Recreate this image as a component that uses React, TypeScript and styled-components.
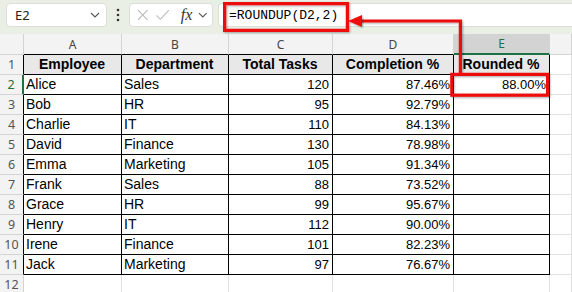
import styled, { createGlobalStyle } from "styled-components";

const GREEN = "#1e7145";

const GlobalStyle = createGlobalStyle`
  html, body {
    margin: 0;
    padding: 0;
    background: #ffffff;
    overflow: hidden;
  }
`;

const Page = styled.div`
  position: relative;
  width: 572px;
  height: 292px;
  overflow: hidden;
  background: #ffffff;
`;

const Toolbar = styled.div`
  display: flex;
  align-items: flex-start;
  height: 34px;
  box-sizing: border-box;
  padding: 3px 0 0 6px;
  background: #e9efe5;
  font-family: "Noto Sans", "Liberation Sans", sans-serif;
`;

const NameBox = styled.div`
  display: flex;
  align-items: center;
  justify-content: space-between;
  width: 101px;
  height: 24px;
  box-sizing: border-box;
  padding: 0 6px 0 8px;
  background: #ffffff;
  border: 1px solid #dcdfd9;
  border-radius: 4px;
  font-size: 13px;
  color: #222222;
`;

const Dots = styled.div`
  width: 22px;
  height: 24px;
  display: flex;
  align-items: center;
  justify-content: center;
`;

const FxGroup = styled.div`
  display: flex;
  align-items: center;
  width: 84px;
  height: 24px;
  box-sizing: border-box;
  padding: 0 4px 0 6px;
  gap: 6px;
  background: #ffffff;
  border: 1px solid #dcdfd9;
  border-radius: 4px;
`;

const FxLabel = styled.span`
  font-family: "Liberation Serif", serif;
  font-style: italic;
  font-size: 16px;
  color: #333333;
  margin-left: 4px;
`;

const FormulaInput = styled.div`
  flex: 1;
  height: 24px;
  margin-left: 5px;
  box-sizing: border-box;
  padding-left: 10px;
  background: #ffffff;
  border: 1px solid #dcdfd9;
  border-right: none;
  border-radius: 4px 0 0 4px;
  display: flex;
  align-items: center;
  font-family: "Liberation Mono", monospace;
  font-size: 13px;
  color: #000000;
`;

const Sheet = styled.div`
  display: grid;
  grid-template-columns: 24px 98px 107px 104px 121px 96px 1fr;
  grid-template-rows: 21px;
  grid-auto-rows: 20px;
  font-family: "Liberation Sans", Arial, sans-serif;
`;

const Corner = styled.div`
  background: #f3f3f3;
  box-sizing: border-box;
  border-right: 1px solid #d4d4d4;
  border-bottom: 1px solid #d4d4d4;
`;

const ColHead = styled.div<{ $active?: boolean; $edge?: boolean }>`
  display: flex;
  align-items: center;
  justify-content: center;
  box-sizing: border-box;
  background: ${(p) => (p.$active ? "#d3d3d3" : "#f3f3f3")};
  border-right: 1px solid #d4d4d4;
  border-bottom: ${(p) =>
    p.$active ? `2px solid ${GREEN}` : p.$edge ? "1px solid #000000" : "1px solid #d4d4d4"};
  font-family: "Noto Sans", sans-serif;
  font-size: 12px;
  color: ${(p) => (p.$active ? GREEN : "#444444")};
`;

const RowHead = styled.div<{ $active?: boolean; $edge?: boolean }>`
  display: flex;
  align-items: center;
  justify-content: center;
  box-sizing: border-box;
  background: #f3f3f3;
  border-bottom: 1px solid #d4d4d4;
  border-right: ${(p) =>
    p.$active ? `2px solid ${GREEN}` : p.$edge ? "1px solid #000000" : "1px solid #d4d4d4"};
  font-family: "Noto Sans", sans-serif;
  font-size: 12.5px;
  color: ${(p) => (p.$active ? GREEN : "#555555")};
`;

const Cell = styled.div<{ $align?: "left" | "right" | "center"; $head?: boolean; $table?: boolean; $num?: boolean }>`
  box-sizing: border-box;
  padding: 0 3px 0 2px;
  line-height: 19px;
  white-space: nowrap;
  overflow: hidden;
  text-align: ${(p) => p.$align ?? "left"};
  font-size: ${(p) => (p.$num ? "13px" : "14px")};
  font-weight: ${(p) => (p.$head ? 700 : 400)};
  color: #000000;
  background: ${(p) => (p.$head ? "#e8e8e8" : "#ffffff")};
  border-right: 1px solid ${(p) => (p.$table ? "#000000" : "#e1e1e1")};
  border-bottom: 1px solid ${(p) => (p.$table ? "#000000" : "#e1e1e1")};
`;

const Overlay = styled.svg`
  position: absolute;
  left: 0;
  top: 0;
  pointer-events: none;
`;

const columns = ["A", "B", "C", "D", "E", ""];
const headers = ["Employee", "Department", "Total Tasks", "Completion %", "Rounded %"];

const rows: [string, string, string, string, string][] = [
  ["Alice", "Sales", "120", "87.46%", "88.00%"],
  ["Bob", "HR", "95", "92.79%", ""],
  ["Charlie", "IT", "110", "84.13%", ""],
  ["David", "Finance", "130", "78.98%", ""],
  ["Emma", "Marketing", "105", "91.34%", ""],
  ["Frank", "Sales", "88", "73.52%", ""],
  ["Grace", "HR", "99", "95.67%", ""],
  ["Henry", "IT", "112", "90.00%", ""],
  ["Irene", "Finance", "101", "82.23%", ""],
  ["Jack", "Marketing", "97", "76.67%", ""],
];

function Chevron() {
  return (
    <svg width="10" height="6" viewBox="0 0 10 6">
      <path d="M1 1 L5 5 L9 1" fill="none" stroke="#555" strokeWidth="1.1" />
    </svg>
  );
}

export default function App() {
  return (
    <>
      <GlobalStyle />
      <Page>
        <Toolbar>
          <NameBox>
            <span>E2</span>
            <Chevron />
          </NameBox>
          <Dots>
            <svg width="4" height="14" viewBox="0 0 4 14">
              <circle cx="2" cy="2" r="1.3" fill="#333" />
              <circle cx="2" cy="7" r="1.3" fill="#333" />
              <circle cx="2" cy="12" r="1.3" fill="#333" />
            </svg>
          </Dots>
          <FxGroup>
            <svg width="14" height="14" viewBox="0 0 14 14">
              <path d="M2 2 L12 12 M12 2 L2 12" stroke="#b8b8b8" strokeWidth="1.1" />
            </svg>
            <svg width="16" height="14" viewBox="0 0 16 14">
              <path d="M1.5 7.5 L5.5 11.5 L14.5 2" fill="none" stroke="#b8b8b8" strokeWidth="1.1" />
            </svg>
            <FxLabel>fx</FxLabel>
            <Chevron />
          </FxGroup>
          <FormulaInput>=ROUNDUP(D2,2)</FormulaInput>
        </Toolbar>

        <Sheet>
          <Corner />
          {columns.map((c, i) => (
            <ColHead key={i} $active={c === "E"} $edge={i < 5}>
              {c}
            </ColHead>
          ))}

          <RowHead $edge>1</RowHead>
          {headers.map((h) => (
            <Cell key={h} $head $table $align="center">
              {h}
            </Cell>
          ))}
          <Cell />

          {rows.map((r, i) => (
            <Row key={r[0]} index={i + 2} values={r} />
          ))}

          <RowHead>12</RowHead>
          {columns.map((_, i) => (
            <Cell key={i} />
          ))}
        </Sheet>

        <Overlay width="572" height="292" viewBox="0 0 572 292">
          <defs>
            <filter id="shadow" x="-10%" y="-10%" width="120%" height="120%">
              <feDropShadow dx="1" dy="1" stdDeviation="0.8" floodColor="#000" floodOpacity="0.35" />
            </filter>
          </defs>
          <g filter="url(#shadow)" fill="none" stroke="#ee1111" strokeWidth="3.2">
            <rect x="224.6" y="3.6" width="122.8" height="26.8" />
            <polyline points="360,21 460.4,21 460.4,73" />
            <rect x="451.8" y="74.4" width="95.8" height="20.8" />
          </g>
          <polygon points="348,21 362,15 362,27" fill="#ee1111" filter="url(#shadow)" />
        </Overlay>
      </Page>
    </>
  );
}

function Row({ index, values }: { index: number; values: string[] }) {
  return (
    <>
      <RowHead $active={index === 2} $edge>
        {index}
      </RowHead>
      <Cell $table>{values[0]}</Cell>
      <Cell $table>{values[1]}</Cell>
      <Cell $table $num $align="right">
        {values[2]}
      </Cell>
      <Cell $table $num $align="right">
        {values[3]}
      </Cell>
      <Cell $table $num $align="right">
        {values[4]}
      </Cell>
      <Cell />
    </>
  );
}
